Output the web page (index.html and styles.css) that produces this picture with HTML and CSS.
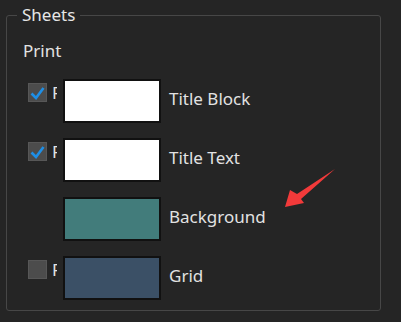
FILE: index.html
```html
<!DOCTYPE html>
<html>
<head>
    <title>Sheets</title>
    <link rel="stylesheet" href="styles.css">
</head>
<body>
    <fieldset class="sheets">
        <legend>Sheets</legend>
        <div class="print-label">Print</div>

        <div class="rows">
            <div class="row">
                <span class="check checked">
                    <svg width="19" height="19" viewBox="0 0 19 19"><path d="M3.5 10.5 L8 15 L15.5 5" fill="none" stroke="#1e8fe6" stroke-width="2.6"/></svg>
                </span>
                <span class="check-text">Print</span>
                <div class="swatch white"></div>
                <span class="name">Title Block</span>
            </div>

            <div class="row">
                <span class="check checked">
                    <svg width="19" height="19" viewBox="0 0 19 19"><path d="M3.5 10.5 L8 15 L15.5 5" fill="none" stroke="#1e8fe6" stroke-width="2.6"/></svg>
                </span>
                <span class="check-text">Print</span>
                <div class="swatch white"></div>
                <span class="name">Title Text</span>
            </div>

            <div class="row">
                <span class="check empty"></span>
                <span class="check-text"></span>
                <div class="swatch teal"></div>
                <span class="name">Background</span>
            </div>

            <div class="row">
                <span class="check"></span>
                <span class="check-text">Print</span>
                <div class="swatch slate"></div>
                <span class="name">Grid</span>
            </div>
        </div>

        <svg class="arrow" width="60" height="50" viewBox="0 0 60 50">
            <polygon points="0,48 5,31 12,35 50,10 16,40 19,44" fill="#f23a3a"/>
        </svg>
    </fieldset>
</body>
</html>
```

FILE: styles.css
```css
body {
    margin: 0;
    padding: 5px 0 0 6px;
    background: #252525;
    font-family: "Noto Sans", "Open Sans", sans-serif;
    font-size: 17px;
    color: #e2e2e2;
}

.sheets {
    position: relative;
    box-sizing: border-box;
    width: 375px;
    height: 306px;
    margin: 0;
    padding: 0 0 0 16px;
    border: 1px solid #474747;
    border-radius: 3px;
}

.sheets legend {
    margin-left: -6px;
    padding: 0 5px;
    line-height: 20px;
    color: #e6e6e6;
}

.print-label {
    margin-top: 15px;
    line-height: 22px;
}

.rows {
    margin-top: 17px;
    display: flex;
    flex-direction: column;
    gap: 15px;
}

.row {
    display: flex;
    align-items: center;
    height: 44px;
}

.check {
    align-self: flex-start;
    box-sizing: border-box;
    width: 19px;
    height: 19px;
    margin: 4px 0 0 5px;
    background: #4c4c4c;
    border: 1px solid #575757;
}

.check svg {
    display: block;
    margin: -1px;
}

.check.empty {
    visibility: hidden;
}

.check-text {
    align-self: flex-start;
    width: 5px;
    margin: 4px 6px 0 5px;
    overflow: hidden;
    line-height: 19px;
    white-space: nowrap;
}

.swatch {
    box-sizing: border-box;
    width: 98px;
    height: 44px;
    border: 2px solid #111;
}

.white { background: #ffffff; }
.teal { background: #427c7b; }
.slate { background: #3b5066; }

.name {
    margin: -6px 0 0 8px;
}

.arrow {
    position: absolute;
    left: 278px;
    top: 134px;
}
```
